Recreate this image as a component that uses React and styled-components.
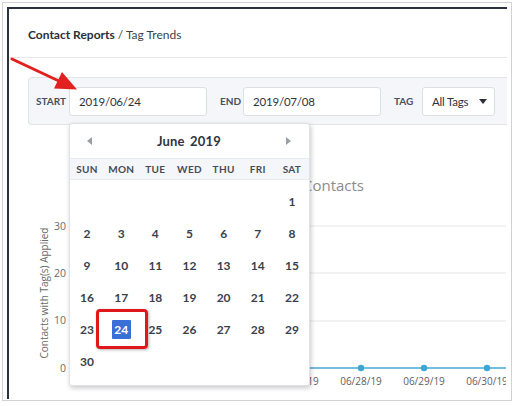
import React from 'react';
import styled, { createGlobalStyle } from 'styled-components';

const GlobalStyle = createGlobalStyle`
  body {
    margin: 0;
    background: #ffffff;
    font-family: Lato, "Open Sans", "Liberation Sans", sans-serif;
  }
  * {
    box-sizing: border-box;
  }
`;

const Page = styled.div`
  position: relative;
  width: 514px;
  height: 406px;
  overflow: hidden;
`;

const Frame = styled.div`
  margin: 2px 0 0 2px;
  width: 510px;
  height: 399px;
  border: 1px solid #d2d2d2;
  padding: 4px 4px 1px 4px;
`;

const Window = styled.div`
  width: 100%;
  height: 100%;
  border-top: 2px solid #2c313e;
  border-left: 2px solid #2c313e;
  display: flex;
  flex-direction: column;
  overflow: hidden;
`;

const Header = styled.div`
  height: 49px;
  flex: none;
  display: flex;
  align-items: center;
  padding: 2px 0 0 19px;
  border-bottom: 1px solid #e6e8eb;
  font-size: 12px;
  color: #3b3f48;
`;

const Strong = styled.span`
  font-weight: 700;
  color: #2a2e37;
  margin-right: 3px;
`;

const Body = styled.div`
  position: relative;
  flex: 1;
`;

const FilterBar = styled.div`
  margin: 19px 0 0 19px;
  height: 48px;
  display: flex;
  align-items: center;
  padding: 0 0 0 7px;
  background: #f4f6f9;
  border: 1px solid #e1e5ea;
  border-right: none;
  border-radius: 4px 0 0 4px;
`;

const FieldLabel = styled.span`
  flex: none;
  width: ${(p) => p.$w}px;
  font-size: 10px;
  font-weight: 700;
  color: #4a505c;
  margin: 0 ${(p) => p.$gap}px 0 ${(p) => p.$lead}px;
`;

const DateInput = styled.input`
  flex: none;
  width: 138px;
  height: 29px;
  border: 1px solid #dcdfe4;
  border-radius: 3px;
  background: #ffffff;
  padding: 0 0 0 9px;
  font-family: Lato, "Open Sans", "Liberation Sans", sans-serif;
  font-size: 11.5px;
  letter-spacing: -0.2px;
  color: #2f333b;
  outline: none;
`;

const Select = styled.div`
  flex: none;
  width: 73px;
  height: 29px;
  border: 1px solid #dcdfe4;
  border-radius: 3px;
  background: #ffffff;
  display: flex;
  align-items: center;
  justify-content: space-between;
  padding: 0 7px 0 9px;
  font-size: 11.5px;
  letter-spacing: -0.2px;
  color: #2f333b;
`;

const Caret = styled.span`
  width: 0;
  height: 0;
  border-left: 4px solid transparent;
  border-right: 4px solid transparent;
  border-top: 5px solid #2c2f36;
`;

const ChartSvg = styled.svg`
  display: block;
`;

const Calendar = styled.div`
  position: absolute;
  left: 60px;
  top: 65px;
  width: 241px;
  background: #ffffff;
  border: 1px solid #dfe2e6;
  border-radius: 3px;
  box-shadow: 1px 2px 5px rgba(0, 0, 0, 0.22);
`;

const CalHead = styled.div`
  height: 34px;
  display: flex;
  align-items: center;
  justify-content: space-between;
  padding: 0 18px 0 17px;
`;

const NavArrow = styled.span`
  width: 0;
  height: 0;
  border-top: 4px solid transparent;
  border-bottom: 4px solid transparent;
  ${(p) =>
    p.$dir === 'left'
      ? 'border-right: 5px solid #9a9ea6;'
      : 'border-left: 5px solid #9a9ea6;'}
`;

const MonthTitle = styled.span`
  font-size: 13px;
  font-weight: 700;
  color: #30343d;
  word-spacing: 2px;
  letter-spacing: 0.2px;
`;

const WeekRow = styled.div`
  height: 22px;
  display: grid;
  grid-template-columns: repeat(7, 1fr);
  align-items: center;
  background: #f4f6f9;
  border-top: 1px solid #e8ebef;
  border-bottom: 1px solid #e8ebef;
`;

const WeekDay = styled.span`
  text-align: center;
  font-size: 10px;
  font-weight: 700;
  letter-spacing: 0.3px;
  color: #474c57;
`;

const DayGrid = styled.div`
  display: grid;
  grid-template-columns: repeat(7, 1fr);
  grid-auto-rows: 32px;
  padding: 5px 0 8px;
`;

const DayCell = styled.div`
  display: flex;
  align-items: center;
  justify-content: center;
`;

const Day = styled.span`
  width: 19px;
  height: 19px;
  display: flex;
  align-items: center;
  justify-content: center;
  font-size: 12px;
  font-weight: 700;
  color: ${(p) => (p.$selected ? '#ffffff' : '#3a3f4c')};
  background: ${(p) => (p.$selected ? '#3a6fd8' : 'transparent')};
  border-radius: 1px;
`;

const Highlight = styled.div`
  position: absolute;
  left: 87px;
  top: 251px;
  width: 52px;
  height: 40px;
  border: 3px solid #e0181c;
  border-radius: 4px;
  box-shadow: 1px 1px 3px rgba(0, 0, 0, 0.3);
`;

const ArrowSvg = styled.svg`
  position: absolute;
  left: 0;
  top: 0;
`;

const weekDays = ['SUN', 'MON', 'TUE', 'WED', 'THU', 'FRI', 'SAT'];
const days = [...Array(6).fill(null), ...Array.from({ length: 30 }, (_, i) => i + 1)];

const chartFont = 'Open Sans, Liberation Sans, sans-serif';
const gridYs = [101, 148, 196];
const yLabels = [
  { v: '30', y: 105 },
  { v: '20', y: 152 },
  { v: '10', y: 199 },
  { v: '0', y: 247 },
];
const points = [
  { x: 100, label: '06/24/19' },
  { x: 163, label: '06/25/19' },
  { x: 226, label: '06/26/19' },
  { x: 289, label: '06/27/19' },
  { x: 352, label: '06/28/19' },
  { x: 415, label: '06/29/19' },
  { x: 478, label: '06/30/19' },
];

function Chart() {
  return (
    <ChartSvg width="497" height="273" viewBox="0 0 497 273">
      <text x="355" y="66" textAnchor="end" fontSize="15" fill="#8c8c8c" fontFamily={chartFont}>
        Tagged Contacts
      </text>
      {gridYs.map((y) => (
        <line key={y} x1="60" x2="497" y1={y} y2={y} stroke="#e7e7e7" strokeWidth="1" />
      ))}
      {yLabels.map((l) => (
        <text key={l.v} x="57" y={l.y} textAnchor="end" fontSize="10.5" fill="#6b6b6b" fontFamily={chartFont}>
          {l.v}
        </text>
      ))}
      <text
        transform="translate(39 168) rotate(-90)"
        textAnchor="middle"
        fontSize="10"
        fill="#6b6b6b"
        fontFamily={chartFont}
      >
        Contacts with Tag(s) Applied
      </text>
      <line x1="60" x2="497" y1="243" y2="243" stroke="#45a7d6" strokeWidth="1.5" />
      {points.map((p) => (
        <g key={p.label}>
          <circle cx={p.x} cy="243" r="3.2" fill="#3ea5d7" />
          <text x={p.x} y="260" textAnchor="middle" fontSize="10" fill="#5e5e5e" fontFamily={chartFont}>
            {p.label}
          </text>
        </g>
      ))}
    </ChartSvg>
  );
}

export default function App() {
  return (
    <Page>
      <GlobalStyle />
      <Frame>
        <Window>
          <Header>
            <Strong>Contact Reports</Strong> / Tag Trends
          </Header>
          <Body>
            <FilterBar>
              <FieldLabel $w={30} $lead={0} $gap={3}>START</FieldLabel>
              <DateInput value="2019/06/24" readOnly />
              <FieldLabel $w={21} $lead={13} $gap={2}>END</FieldLabel>
              <DateInput value="2019/07/08" readOnly />
              <FieldLabel $w={20} $lead={13} $gap={8}>TAG</FieldLabel>
              <Select>
                All Tags
                <Caret />
              </Select>
            </FilterBar>
            <Chart />
            <Calendar>
              <CalHead>
                <NavArrow $dir="left" />
                <MonthTitle>June 2019</MonthTitle>
                <NavArrow $dir="right" />
              </CalHead>
              <WeekRow>
                {weekDays.map((d) => (
                  <WeekDay key={d}>{d}</WeekDay>
                ))}
              </WeekRow>
              <DayGrid>
                {days.map((d, i) => (
                  <DayCell key={i}>{d && <Day $selected={d === 24}>{d}</Day>}</DayCell>
                ))}
              </DayGrid>
            </Calendar>
            <Highlight />
          </Body>
        </Window>
      </Frame>
      <ArrowSvg width="514" height="406" viewBox="0 0 514 406">
        <line x1="12" y1="59" x2="60" y2="81.5" stroke="#e2201f" strokeWidth="3" strokeLinecap="round" />
        <polygon points="77,89.5 54,88.5 62,72" fill="#e2201f" />
      </ArrowSvg>
    </Page>
  );
}
